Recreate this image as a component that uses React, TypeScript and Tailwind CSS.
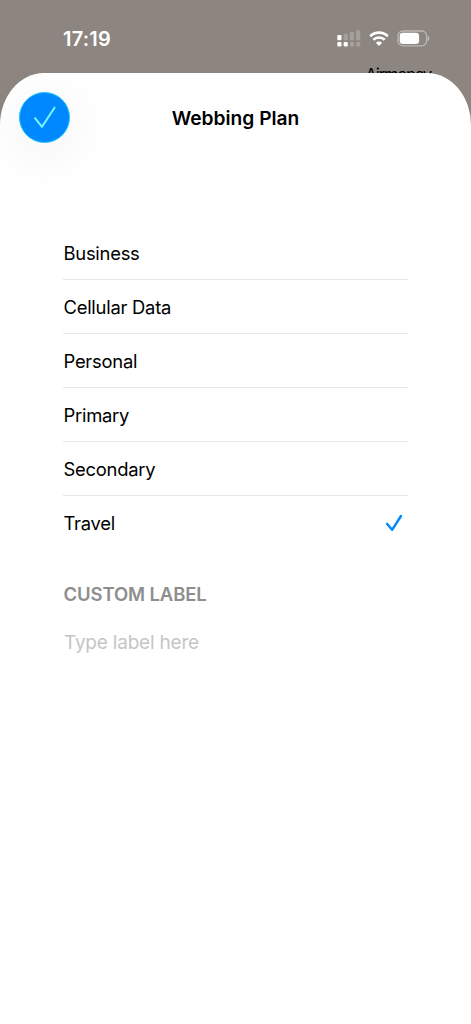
const labels = ['Business', 'Cellular Data', 'Personal', 'Primary', 'Secondary', 'Travel'];

function StatusIcons() {
  return (
    <div className="flex items-center text-white">
      <svg width="24" height="18" viewBox="0 0 24 18" fill="currentColor">
        <rect x="0.3" y="5" width="4.2" height="5.2" rx="1" />
        <g opacity="0.22">
          <rect x="6.6" y="3.8" width="4.2" height="6.4" rx="1" />
          <rect x="12.8" y="2" width="4.2" height="8.2" rx="1" />
          <rect x="19.1" y="0.2" width="4.2" height="10" rx="1" />
          <rect x="12.8" y="12" width="4.2" height="4.4" rx="1" />
          <rect x="19.1" y="12" width="4.2" height="4.4" rx="1" />
        </g>
        <rect x="0.3" y="12" width="4.2" height="4.4" rx="1" />
        <rect x="6.6" y="12" width="4.2" height="4.4" rx="1" />
      </svg>
      <svg className="ml-2 -translate-y-px" width="20" height="15" viewBox="0 0 20 15" fill="none" stroke="currentColor" strokeWidth="2.6">
        <path d="M1.2 5.2C6.1 0.4 13.9 0.4 18.8 5.2" />
        <path d="M4.3 8.7c3.1-2.9 8.3-2.9 11.4 0" />
        <path d="M6.9 11.7c1.8-1.6 4.4-1.6 6.2 0L10 14.9z" fill="currentColor" stroke="none" />
      </svg>
      <svg className="ml-2 -translate-y-px" width="33" height="17" viewBox="0 0 33 17" fill="none">
        <rect x="1" y="1" width="28.6" height="14.8" rx="4.8" stroke="currentColor" strokeWidth="1.3" opacity="0.42" />
        <rect x="2.7" y="2.8" width="19.4" height="11.2" rx="3.3" fill="currentColor" />
        <path d="M30.8 6c2 .7 2 4.3 0 5z" fill="currentColor" opacity="0.5" />
      </svg>
    </div>
  );
}

export default function App() {
  return (
    <div className="h-[1024px] w-full overflow-hidden bg-[#8d857f] font-['Inter',sans-serif] text-black">
      <div className="relative h-[72.5px]">
        <div className="flex items-center justify-between pt-[25px] pl-[63px] pr-[41px]">
          <span className="pt-px text-[20px] leading-[27px] font-semibold tracking-[0.2px] text-white">17:19</span>
          <StatusIcons />
        </div>
        <span className="absolute top-[64px] right-[40px] text-[17px] leading-[22px] tracking-[-1.4px]">Airmoney</span>
      </div>

      <main className="relative h-[952px] bg-white [border-top-left-radius:44px_52px] [border-top-right-radius:44px_52px]">
        <header className="relative flex h-[89.5px] items-center justify-center">
          <button
            aria-label="Done"
            className="absolute top-[19px] left-[19px] flex size-[51px] items-center justify-center rounded-full border border-[#1bc4ff] bg-[#0088ff] shadow-[0_10px_56px_4px_rgba(0,0,0,0.06)]"
          >
            <svg width="24" height="24" viewBox="0 0 24 24" fill="none" stroke="#79f3ff" strokeWidth="2.1" strokeLinecap="round" strokeLinejoin="round">
              <path d="M2 13.2l7 8.6L21.5 2.7" />
            </svg>
          </button>
          <h1 className="pt-[2px] text-[19.2px] font-semibold">Webbing Plan</h1>
        </header>

        <section className="px-[63px] pt-[64px]">
          <ul className="divide-y divide-[#e8e8e8]">
            {labels.map((label) => (
              <li key={label} className="flex h-[54px] items-center justify-between text-[18.4px] tracking-[-0.25px]">
                <span className="pt-[2px] pl-[0.5px]">{label}</span>
                {label === 'Travel' && (
                  <svg className="mr-[5px]" width="18" height="18" viewBox="0 0 18 18" fill="none" stroke="#0088ff" strokeWidth="2.4" strokeLinecap="round" strokeLinejoin="round">
                    <path d="M2 9.8l5.1 6L16 2" />
                  </svg>
                )}
              </li>
            ))}
          </ul>
          <h2 className="mt-[30px] pl-[0.5px] text-[18.5px] leading-7 font-semibold tracking-[-0.12px] text-[#8e8e8e]">CUSTOM LABEL</h2>
          <input
            className="mt-[21px] block h-7 w-full pl-px text-[19px] tracking-[-0.2px] outline-none placeholder:text-[#c5c5c6]"
            placeholder="Type label here"
          />
        </section>
      </main>
    </div>
  );
}
